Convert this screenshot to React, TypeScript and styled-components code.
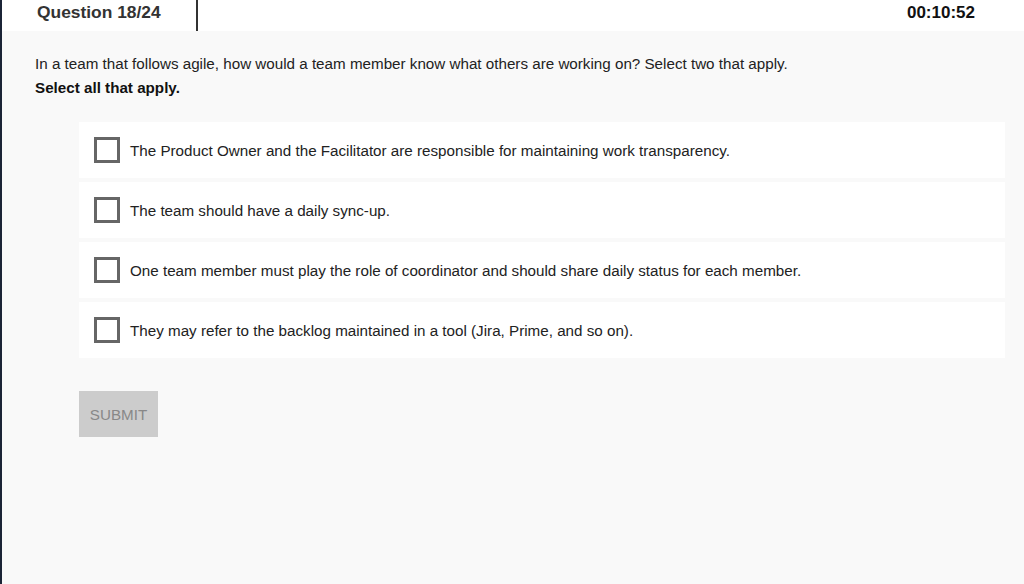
import React, { useState } from 'react';
import styled, { createGlobalStyle } from 'styled-components';

const GlobalStyle = createGlobalStyle`
  html, body {
    margin: 0;
    padding: 0;
    background: #f9f9f9;
  }
  body {
    font-family: "Liberation Sans", Arial, sans-serif;
  }
`;

const SPage = styled.div`
  display: flex;
  min-height: 584px;
  height: 100vh;
  border-left: 2px solid #1b2436;
  box-sizing: border-box;
  background: #f9f9f9;
`;

const SMain = styled.div`
  flex: 1;
  display: flex;
  flex-direction: column;
`;

const SHeader = styled.header`
  height: 31px;
  display: flex;
  align-items: stretch;
  justify-content: space-between;
  background: #ffffff;
`;

const SQuestionNo = styled.div`
  width: 159px;
  padding-left: 35px;
  display: flex;
  align-items: center;
  border-right: 2px solid #333333;
  font-size: 17.4px;
  font-weight: bold;
  color: #333333;
  padding-bottom: 6px;
`;

const STimer = styled.div`
  display: flex;
  align-items: center;
  padding-right: 49px;
  padding-bottom: 6px;
  font-size: 17px;
  font-weight: bold;
  color: #111111;
`;

const SContent = styled.main`
  padding: 21px 19px 0 33px;
`;

const SQuestion = styled.p`
  margin: 0;
  font-size: 15.2px;
  line-height: 24px;
  color: #222222;
`;

const SHint = styled(SQuestion)`
  font-weight: bold;
  color: #111111;
`;

const SOptions = styled.ul`
  list-style: none;
  margin: 22px 0 0 44px;
  padding: 0;
  display: flex;
  flex-direction: column;
  gap: 4px;
`;

const SOption = styled.li`
  height: 56px;
  display: flex;
  align-items: center;
  gap: 10px;
  padding-left: 15px;
  background: #ffffff;
  cursor: pointer;
  font-size: 15.2px;
  color: #222222;
`;

const SCheck = styled.span<{ checked: boolean }>`
  width: 20px;
  height: 20px;
  border: 3px solid #666666;
  background: ${({ checked }) => (checked ? '#666666' : '#ffffff')};
  flex-shrink: 0;
`;

const SSubmit = styled.button<{ disabled: boolean }>`
  margin: 33px 0 0 44px;
  width: 79px;
  height: 46px;
  border: none;
  background: #cccccc;
  color: #888888;
  font-family: "Liberation Sans", Arial, sans-serif;
  font-size: 15.2px;
  text-transform: uppercase;
  padding: 0;
  align-self: flex-start;
`;

const options = [
  'The Product Owner and the Facilitator are responsible for maintaining work transparency.',
  'The team should have a daily sync-up.',
  'One team member must play the role of coordinator and should share daily status for each member.',
  'They may refer to the backlog maintained in a tool (Jira, Prime, and so on).',
];

export default function App() {
  const [selected, setSelected] = useState<number[]>([]);

  const toggle = (i: number) =>
    setSelected((s) => (s.includes(i) ? s.filter((x) => x !== i) : [...s, i]));

  return (
    <>
      <GlobalStyle />
      <SPage>
        <SMain>
          <SHeader>
            <SQuestionNo>Question 18/24</SQuestionNo>
            <STimer>00:10:52</STimer>
          </SHeader>
          <SContent>
            <SQuestion>
              In a team that follows agile, how would a team member know what others are working
              on? Select two that apply.
            </SQuestion>
            <SHint>Select all that apply.</SHint>
            <SOptions>
              {options.map((text, i) => (
                <SOption key={i} onClick={() => toggle(i)}>
                  <SCheck checked={selected.includes(i)} />
                  {text}
                </SOption>
              ))}
            </SOptions>
            <SSubmit disabled={selected.length < 2}>Submit</SSubmit>
          </SContent>
        </SMain>
      </SPage>
    </>
  );
}
